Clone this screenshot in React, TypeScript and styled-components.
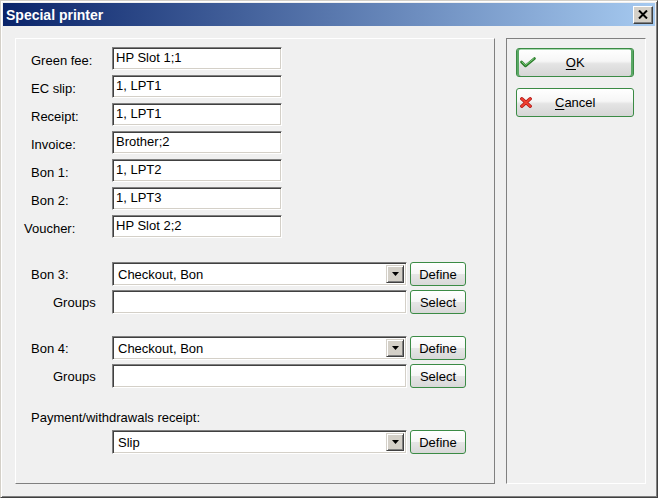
import React from 'react';
import styled, { createGlobalStyle } from 'styled-components';

const GlobalStyle = createGlobalStyle`
  html, body {
    margin: 0;
    padding: 0;
    background: #f0f0f0;
  }
  body {
    font-family: "Liberation Sans", Arial, sans-serif;
    font-size: 13px;
    color: #000;
  }
`;

const Window = styled.div`
  width: 658px;
  height: 498px;
  box-sizing: border-box;
  background: #f0f0f0;
  border: 1px solid;
  border-color: #d4d0c8 #404040 #404040 #d4d0c8;
  box-shadow: inset 1px 1px 0 #fff, inset -1px -1px 0 #808080;
  padding: 2px;
  display: flex;
  flex-direction: column;
`;

const TitleBar = styled.div`
  height: 23px;
  flex-shrink: 0;
  display: flex;
  align-items: center;
  justify-content: space-between;
  padding: 0 2px 0 3px;
  background: linear-gradient(to right, #0a246a, #a6caf0);
`;

const Title = styled.span`
  color: #fff;
  font-weight: bold;
  font-size: 14px;
`;

const CloseButton = styled.div`
  width: 20px;
  height: 18px;
  box-sizing: border-box;
  background: #d4d0c8;
  border: 1px solid;
  border-color: #fff #404040 #404040 #fff;
  box-shadow: inset -1px -1px 0 #808080;
  display: flex;
  align-items: center;
  justify-content: center;
`;

const Body = styled.div`
  flex: 1;
  display: flex;
  gap: 11px;
  padding: 12px 9px 11px 12px;
`;

const LeftPanel = styled.div`
  width: 481px;
  box-sizing: border-box;
  border: 1px solid;
  border-color: #fff #808080 #808080 #fff;
  padding-top: 8px;
  display: flex;
  flex-direction: column;
`;

const RightPanel = styled.div`
  width: 140px;
  box-sizing: border-box;
  border: 1px solid;
  border-color: #808080 #fff #fff #808080;
  padding: 9px 0 0 9px;
  display: flex;
  flex-direction: column;
  gap: 11px;
`;

const Row = styled.div<{ $top?: number; $h?: number }>`
  display: flex;
  align-items: center;
  height: ${p => p.$h ?? 23}px;
  margin-top: ${p => p.$top ?? 0}px;
`;

const Label = styled.span<{ $indent?: number; $drop?: number }>`
  width: 96px;
  box-sizing: border-box;
  padding-left: ${p => p.$indent ?? 15}px;
  padding-top: ${p => p.$drop ?? 0}px;
  white-space: nowrap;
`;

const Caption = styled.span`
  padding-left: 15px;
  line-height: 16px;
  white-space: nowrap;
`;

const Field = styled.div<{ $w: number }>`
  width: ${p => p.$w}px;
  height: 100%;
  box-sizing: border-box;
  background: #fff;
  border: 1px solid;
  border-color: #808080 #fff #fff #808080;
  box-shadow: inset 1px 1px 0 #404040, inset -1px -1px 0 #d4d0c8;
  padding: 3px 3px 0 3px;
  font-size: 13px;
  line-height: 14px;
  white-space: nowrap;
  overflow: hidden;
`;

const Combo = styled.div`
  width: 295px;
  height: 100%;
  box-sizing: border-box;
  background: #fff;
  border: 1px solid;
  border-color: #808080 #fff #fff #808080;
  box-shadow: inset 1px 1px 0 #404040, inset -1px -1px 0 #d4d0c8;
  padding: 2px 2px 2px 5px;
  display: flex;
  align-items: center;
  justify-content: space-between;
  font-size: 13px;
`;

const ArrowButton = styled.div`
  width: 18px;
  height: 100%;
  box-sizing: border-box;
  background: #d4d0c8;
  border: 1px solid;
  border-color: #d4d0c8 #404040 #404040 #d4d0c8;
  box-shadow: inset 1px 1px 0 #fff, inset -1px -1px 0 #808080;
  display: flex;
  align-items: center;
  justify-content: center;
`;

const SmallButton = styled.div`
  width: 56px;
  height: 24px;
  margin-left: 3px;
  box-sizing: border-box;
  border: 1px solid #3b8b45;
  border-radius: 3px;
  background: linear-gradient(#ffffff, #f6f6f6 50%, #e6e6e6 51%, #d8d8d8);
  display: flex;
  align-items: center;
  justify-content: center;
  font-size: 13px;
`;

const ActionButton = styled.div<{ $default?: boolean }>`
  width: 118px;
  height: 29px;
  box-sizing: border-box;
  border: 1px solid #3b8b45;
  border-radius: 3px;
  background: linear-gradient(#ffffff, #f6f6f6 45%, #e4e4e4 55%, #d6d6d6);
  box-shadow: ${p => (p.$default ? 'inset 2px 0 0 #5aa865, inset -2px 0 0 #5aa865, inset 0 1px 0 #a8d8b0' : 'none')};
  display: grid;
  grid-template-columns: 22px 1fr 22px;
  align-items: center;
  font-size: 13px;
`;

const IconSlot = styled.span`
  display: flex;
  align-items: center;
  padding-left: 3px;
`;

const ButtonText = styled.span`
  text-align: center;
  u {
    text-decoration: underline;
    text-underline-offset: 2px;
  }
`;

const CloseGlyph = () => (
  <svg width="10" height="9" viewBox="0 0 10 9">
    <path d="M1 0.5 L9 8.5 M9 0.5 L1 8.5" stroke="#000" strokeWidth="2" />
  </svg>
);

const DownArrow = () => (
  <svg width="7" height="4" viewBox="0 0 7 4">
    <path d="M0 0 H7 L3.5 4 Z" fill="#000" />
  </svg>
);

const CheckIcon = () => (
  <svg width="16" height="11" viewBox="0 0 16 11">
    <path d="M1.5 5 L5.5 9 L14.5 1.5" fill="none" stroke="#2a7d2a" strokeWidth="2.6" strokeLinecap="round" strokeLinejoin="round" />
    <path d="M2 5 L5.5 8.2 L14 1.6" fill="none" stroke="#7ccb7c" strokeWidth="1" strokeLinecap="round" strokeLinejoin="round" />
  </svg>
);

const CrossIcon = () => (
  <svg width="12" height="11" viewBox="0 0 12 11">
    <path d="M1.8 1.8 L10.2 9.2 M10.2 1.8 L1.8 9.2" stroke="#b01818" strokeWidth="3.4" strokeLinecap="round" />
    <path d="M1.8 1.8 L10.2 9.2 M10.2 1.8 L1.8 9.2" stroke="#f04030" strokeWidth="1.8" strokeLinecap="round" />
  </svg>
);

const textRows: { label: string; value: string; indent?: number }[] = [
  { label: 'Green fee:', value: 'HP Slot 1;1' },
  { label: 'EC slip:', value: '1, LPT1' },
  { label: 'Receipt:', value: '1, LPT1' },
  { label: 'Invoice:', value: 'Brother;2' },
  { label: 'Bon 1:', value: '1, LPT2' },
  { label: 'Bon 2:', value: '1, LPT3' },
  { label: 'Voucher:', value: 'HP Slot 2;2', indent: 8 },
];

const ComboRow: React.FC<{ label?: string; value: string; top: number; button: string }> = ({ label, value, top, button }) => (
  <Row $top={top} $h={24}>
    <Label>{label}</Label>
    <Combo>
      <span>{value}</span>
      <ArrowButton>
        <DownArrow />
      </ArrowButton>
    </Combo>
    <SmallButton>{button}</SmallButton>
  </Row>
);

const GroupsRow: React.FC<{ top: number }> = ({ top }) => (
  <Row $top={top} $h={24}>
    <Label $indent={37}>Groups</Label>
    <Field $w={295} />
    <SmallButton>Select</SmallButton>
  </Row>
);

const App: React.FC = () => {
  return (
    <>
      <GlobalStyle />
      <Window>
        <TitleBar>
          <Title>Special printer</Title>
          <CloseButton>
            <CloseGlyph />
          </CloseButton>
        </TitleBar>
        <Body>
          <LeftPanel>
            {textRows.map((r, i) => (
              <Row key={r.label} $top={i === 0 ? 0 : 5}>
                <Label $indent={r.indent} $drop={4}>{r.label}</Label>
                <Field $w={170}>{r.value}</Field>
              </Row>
            ))}
            <ComboRow label="Bon 3:" value="Checkout, Bon" top={24} button="Define" />
            <GroupsRow top={4} />
            <ComboRow label="Bon 4:" value="Checkout, Bon" top={22} button="Define" />
            <GroupsRow top={4} />
            <Row $top={22} $h={16}>
              <Caption>Payment/withdrawals receipt:</Caption>
            </Row>
            <ComboRow value="Slip" top={4} button="Define" />
          </LeftPanel>
          <RightPanel>
            <ActionButton $default>
              <IconSlot>
                <CheckIcon />
              </IconSlot>
              <ButtonText>
                <u>O</u>K
              </ButtonText>
            </ActionButton>
            <ActionButton>
              <IconSlot>
                <CrossIcon />
              </IconSlot>
              <ButtonText>
                <u>C</u>ancel
              </ButtonText>
            </ActionButton>
          </RightPanel>
        </Body>
      </Window>
    </>
  );
};

export default App;
